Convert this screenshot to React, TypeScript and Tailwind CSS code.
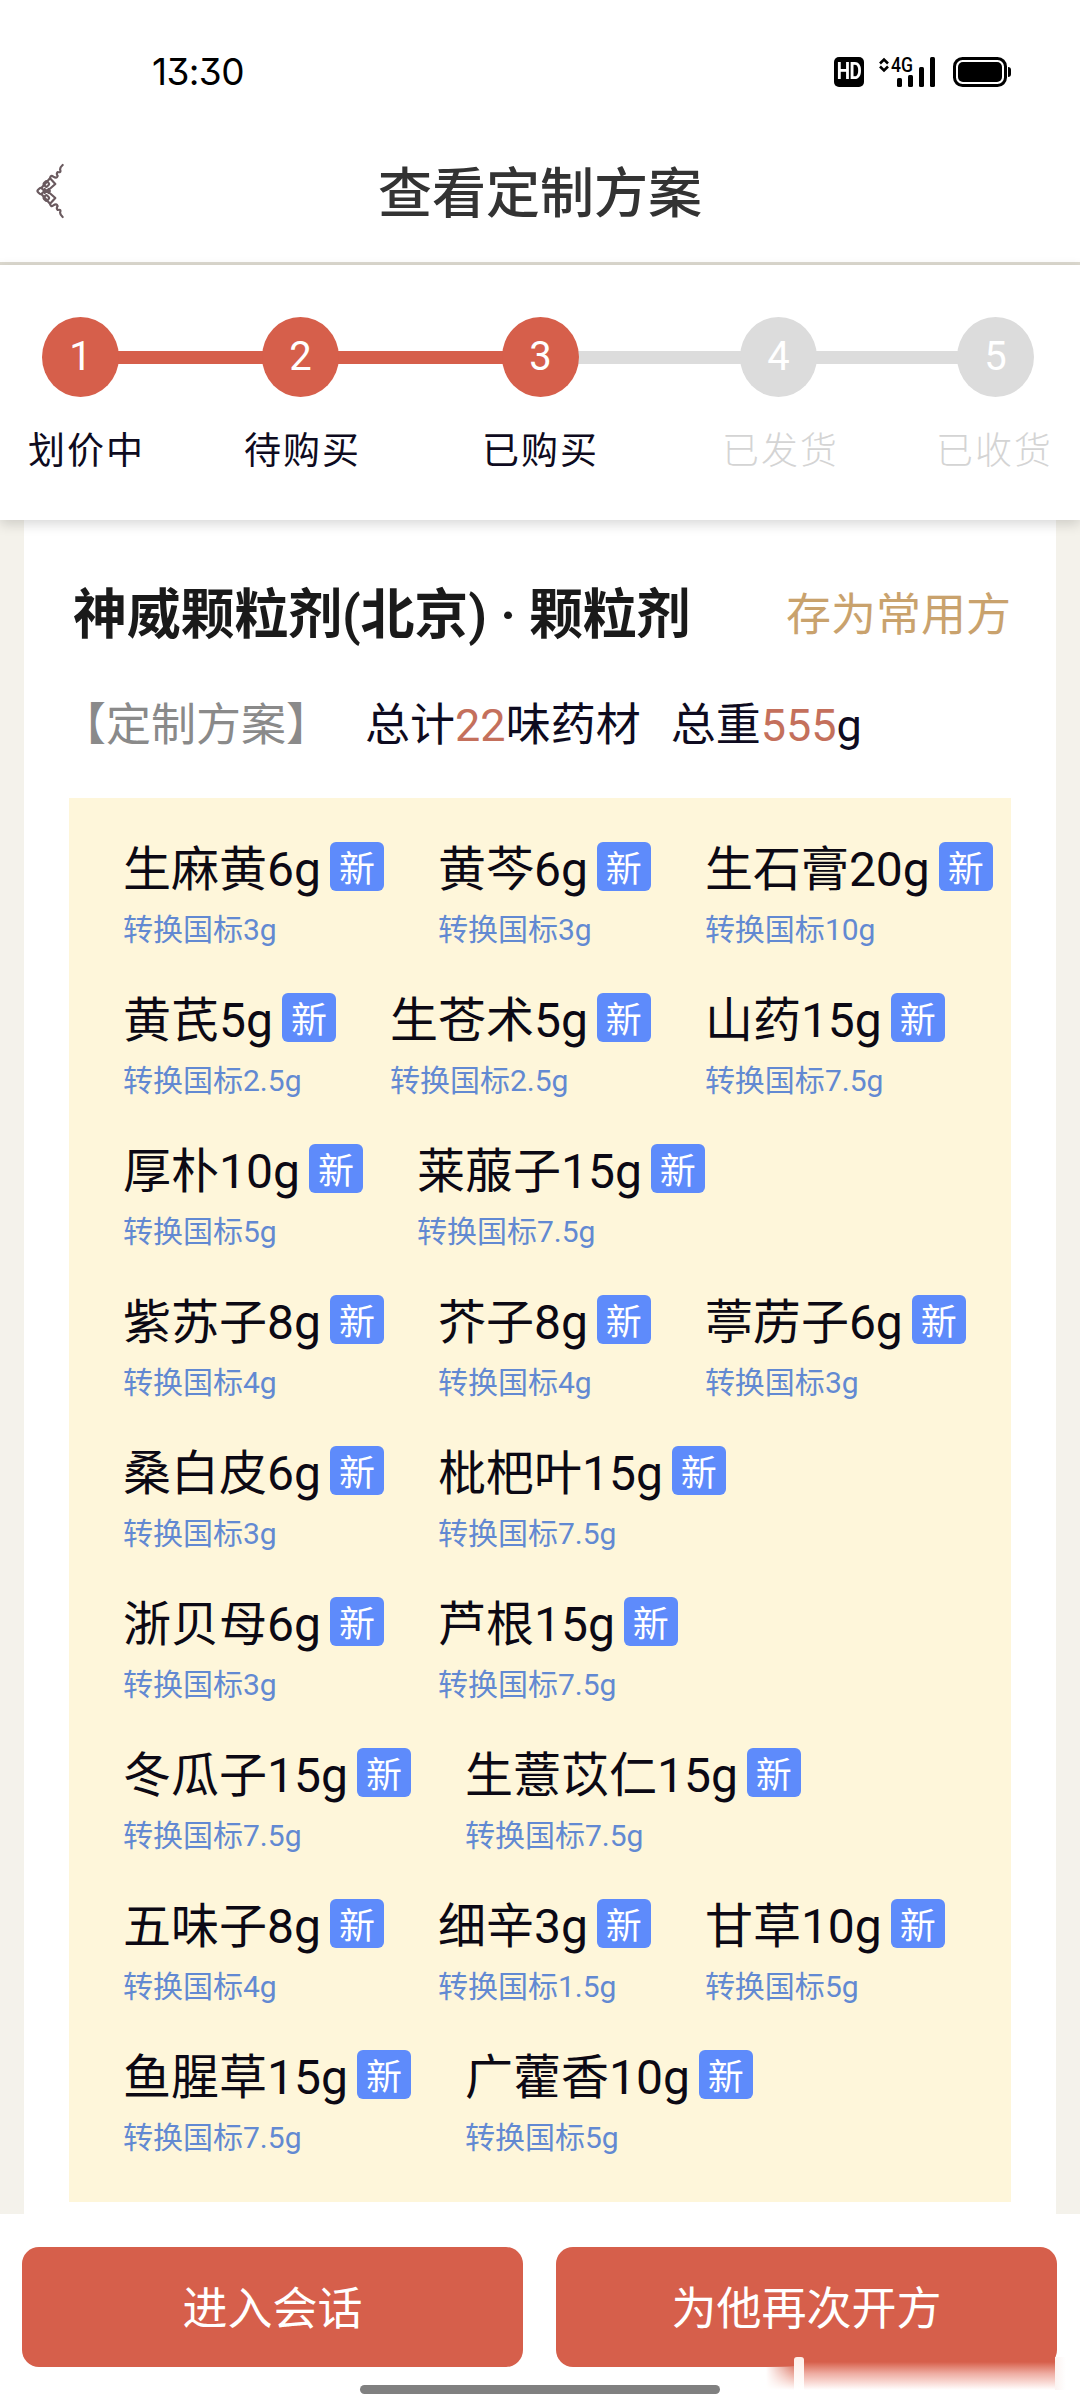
import clsx from 'clsx';

interface Step {
  label: string;
  done: boolean;
  line: string;
  gap: string;
}

interface Herb {
  name: string;
  converted: string;
}

const steps: Step[] = [
  { label: '划价中', done: true, line: '', gap: 'ml-[28px]' },
  { label: '待购买', done: true, line: 'w-[143px]', gap: 'ml-[99px]' },
  { label: '已购买', done: true, line: 'w-[163px]', gap: 'ml-[121px]' },
  { label: '已发货', done: false, line: 'w-[161px]', gap: 'ml-[123px]' },
  { label: '已收货', done: false, line: 'w-[140px]', gap: 'ml-[97px]' },
];

const herbs: Herb[] = [
  { name: '生麻黄6g', converted: '3g' },
  { name: '黄芩6g', converted: '3g' },
  { name: '生石膏20g', converted: '10g' },
  { name: '黄芪5g', converted: '2.5g' },
  { name: '生苍术5g', converted: '2.5g' },
  { name: '山药15g', converted: '7.5g' },
  { name: '厚朴10g', converted: '5g' },
  { name: '莱菔子15g', converted: '7.5g' },
  { name: '紫苏子8g', converted: '4g' },
  { name: '芥子8g', converted: '4g' },
  { name: '葶苈子6g', converted: '3g' },
  { name: '桑白皮6g', converted: '3g' },
  { name: '枇杷叶15g', converted: '7.5g' },
  { name: '浙贝母6g', converted: '3g' },
  { name: '芦根15g', converted: '7.5g' },
  { name: '冬瓜子15g', converted: '7.5g' },
  { name: '生薏苡仁15g', converted: '7.5g' },
  { name: '五味子8g', converted: '4g' },
  { name: '细辛3g', converted: '1.5g' },
  { name: '甘草10g', converted: '5g' },
  { name: '鱼腥草15g', converted: '7.5g' },
  { name: '广藿香10g', converted: '5g' },
];

function StatusBar() {
  return (
    <div className="flex h-[126px] items-start justify-between pl-[152px] pr-[68px] pt-[57px] text-black">
      <div className="-mt-px font-['Inter',sans-serif] text-[37px] leading-[32px] tracking-[-0.6px] [font-feature-settings:'cv09']">
        13:30
      </div>
      <div className="flex h-[30px] items-center">
        <div className="flex h-[30px] w-[30px] items-center justify-center rounded-[5px] bg-black font-['Roboto',sans-serif] text-[23px] font-bold leading-[30px] tracking-[-0.5px] text-white">
          <span className="inline-block scale-x-[0.82]">HD</span>
        </div>
        <svg className="ml-[14px]" width="58" height="50" viewBox="0 -10 58 50">
          <path d="M2 6.5 L6 2.5 L10 6.5 M2 9.5 L6 13.5 L10 9.5" fill="none" stroke="#000" strokeWidth="2.6" />
          <text x="13" y="14.5" fontFamily="Roboto, sans-serif" fontSize="20" fontWeight="500" textLength="22" lengthAdjust="spacingAndGlyphs">4G</text>
          <rect x="19" y="21" width="5" height="9" rx="1.5" />
          <rect x="30" y="18" width="5" height="12" rx="1.5" />
          <rect x="41" y="10" width="5" height="20" rx="1.5" />
          <rect x="52" y="0" width="5" height="30" rx="1.5" />
        </svg>
        <svg className="ml-[17px]" width="59" height="30" viewBox="0 0 59 30">
          <rect x="1.5" y="1.5" width="51" height="27" rx="8" fill="none" stroke="#000" strokeWidth="3" />
          <rect x="5" y="5" width="44" height="20" rx="5" />
          <path d="M55 10 Q58 10 58 13 V17 Q58 20 55 20 Z" />
        </svg>
      </div>
    </div>
  );
}

// Knot-pattern arrow
function BackIcon() {
  return (
    <svg width="28" height="56" viewBox="18 19 84 168" fill="none" stroke="#6a5a5f" strokeWidth="6.5" strokeLinejoin="round" strokeLinecap="round">
      <rect x="24" y="95" width="16" height="16" rx="5" transform="rotate(45 32 103)" />
      <rect x="42" y="75" width="14" height="14" rx="4" transform="rotate(45 49 82)" />
      <rect x="42" y="117" width="14" height="14" rx="4" transform="rotate(45 49 124)" />
      <path d="M36 92 L60 65 L76 82 L52 103 L76 124 L60 141 L36 114" />
      <path d="M44 97 L56 109 M44 109 L56 97 M42 103 H60" />
      <path d="M60 65 Q62 54 70 60 Q80 67 83 58 Q78 51 83 46 Q93 49 91 41 Q88 34 98 25" />
      <path d="M60 141 Q62 152 70 146 Q80 139 83 148 Q78 155 83 160 Q93 157 91 165 Q88 172 98 181" />
    </svg>
  );
}

function Header() {
  return (
    <header className="border-b-[3px] border-[#dddad0] bg-white">
      <StatusBar />
      <div className="grid h-[136px] grid-cols-[200px_1fr_200px] items-center">
        <button className="pb-[8px] pl-[36px]">
          <BackIcon />
        </button>
        <h1 className="text-center text-[54px] font-medium leading-[137px] text-[#333]">查看定制方案</h1>
      </div>
    </header>
  );
}

function Stepper() {
  return (
    <section className="relative z-10 h-[255px] bg-white pt-[52px] shadow-[0_4px_12px_rgba(0,0,0,0.16)]">
      <div className="flex h-[80px] items-center pl-[42px]">
        {steps.map((step, i) => (
          <div key={step.label} className="flex items-center">
            {i > 0 && (
              <div className={clsx('-mx-[2px] h-[13px] box-content border-x-2', step.line, step.done ? 'border-[#d65f4b] bg-[#d65f4b]' : 'border-[#dcdcdc] bg-[#dcdcdc]')} />
            )}
            <div
              className={clsx(
                "relative flex h-[80px] w-[77px] items-center justify-center rounded-[50%] font-['Roboto',sans-serif] text-[40px] font-[450] text-white",
                step.done ? 'bg-[#d65f4b]' : 'bg-[#dcdcdc]'
              )}
            >
              {i + 1}
            </div>
          </div>
        ))}
      </div>
      <div className="mt-[30px] flex text-[37px] leading-[50px] tracking-[2px]">
        {steps.map((step) => (
          <div key={step.label} className={clsx('w-[117px] whitespace-nowrap', step.gap, step.done ? 'text-[#0e0b20]' : 'font-light text-[#d4d4d4]')}>
            {step.label}
          </div>
        ))}
      </div>
    </section>
  );
}

function HerbItem({ herb }: { herb: Herb }) {
  return (
    <div className="h-[109px] whitespace-nowrap">
      <div className="flex items-start gap-[9px]">
        <span className="text-[48px] leading-[55px] text-[#0c0914]">{herb.name}</span>
        <span className="h-[49px] w-[54px] rounded-[6px] bg-[#5e8bfb] text-center text-[36px] leading-[56px] text-white">新</span>
      </div>
      <div className="mt-[13px] text-[30px] leading-[40px] text-[#6289d2]">转换国标{herb.converted}</div>
    </div>
  );
}

function Prescription() {
  return (
    <main className="h-[1694px] bg-[#f4f2eb] px-[24px]">
      <div className="h-full bg-white pt-[60px]">
        <div className="flex items-center justify-between pl-[49px] pr-[45px] leading-[72px]">
          <h2 className="text-[54px] font-semibold tracking-[-0.2px] text-[#1a1a1a]">神威颗粒剂(北京) · 颗粒剂</h2>
          <button className="text-[45px] text-[#c9a26d]">存为常用方</button>
        </div>
        <div className="mt-[44px] flex pl-[37px] text-[45px] leading-[60px] text-[#0e0b20]">
          <span className="text-[#8a8a8a]">【定制方案】</span>
          <span className="ml-[34px]">
            总计<span className="text-[#c4705c]">22</span>味药材
          </span>
          <span className="ml-[30px]">
            总重<span className="text-[#c4705c]">555</span>g
          </span>
        </div>
        <div className="ml-[45px] mt-[42px] flex h-[1404px] w-[942px] flex-wrap content-start gap-x-[54px] gap-y-[42px] bg-[#fef6da] pl-[54px] pr-[10px] pt-[44px]">
          {herbs.map((herb) => (
            <HerbItem key={herb.name} herb={herb} />
          ))}
        </div>
      </div>
    </main>
  );
}

function Footer() {
  return (
    <footer className="relative h-[186px] bg-white pt-[33px]">
      <div className="flex gap-[33px] pl-[22px]">
        <button className="h-[120px] w-[501px] rounded-[17px] bg-[#d65f4b] text-[45px] leading-[126px] text-white">进入会话</button>
        <button className="h-[120px] w-[501px] rounded-[17px] bg-[#d65f4b] text-[45px] leading-[126px] text-white">为他再次开方</button>
      </div>
      <div className="mx-auto mt-[18px] h-[9px] w-[360px] rounded-full bg-[#808080]" />
      {/* Faded strip over the corner of the second button */}
      <div className="absolute left-[766px] top-[143px] flex h-[33px] w-[300px]">
        <div className="mt-[9px] h-[24px] w-[28px] bg-linear-to-b from-[#dc7d6d] to-white [mask-image:linear-gradient(to_right,transparent,black)]" />
        <div className="w-[10px] rounded-t-[3px] bg-linear-to-b from-[#fdeee9] to-white" />
        <div className="w-[251px] bg-white">
          <div className="h-full bg-linear-to-b from-[#d65f4b] from-15% via-[#eeaca2] via-50% to-white" />
        </div>
        <div className="w-[11px] bg-linear-to-r from-[#fbf3f1] to-white" />
      </div>
    </footer>
  );
}

export default function App() {
  return (
    <div className="h-[2400px] w-[1080px] overflow-hidden bg-white font-['Roboto','Noto_Sans_CJK_SC',sans-serif]">
      <Header />
      <Stepper />
      <Prescription />
      <Footer />
    </div>
  );
}
